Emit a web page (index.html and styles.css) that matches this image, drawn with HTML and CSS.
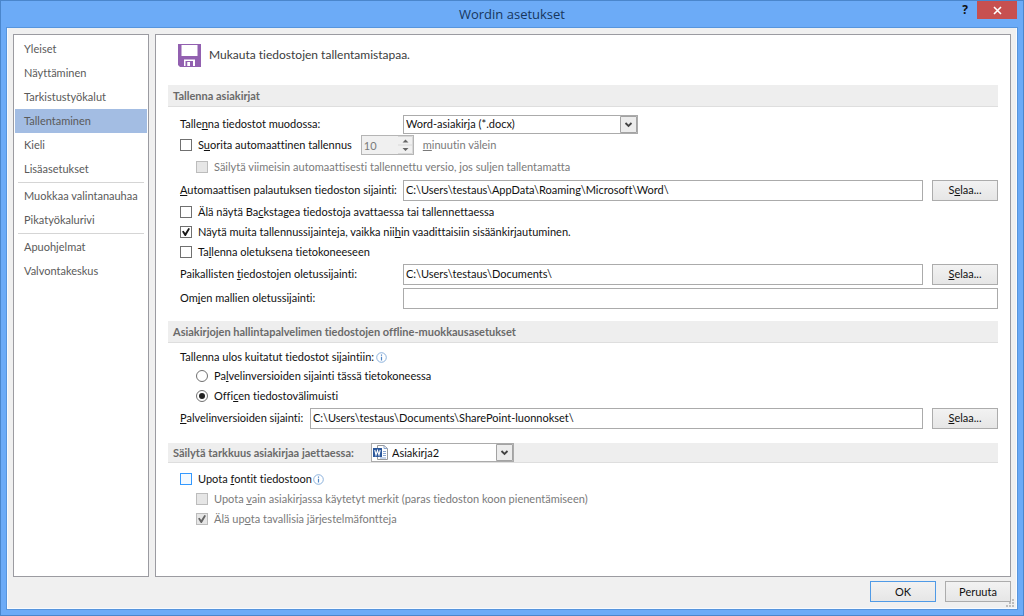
FILE: index.html
```html
<!DOCTYPE html>
<html lang="fi">
<head>
<meta charset="utf-8">
<meta name="viewport" content="width=device-width, initial-scale=1">
<title>Wordin asetukset</title>
<link rel="stylesheet" href="styles.css">
</head>
<body>
<div class="window">
  <header class="titlebar">
    <h1 class="titlebar-text">Wordin asetukset</h1>
    <div class="titlebar-buttons">
      <button class="help-button" type="button" aria-label="Ohje">?</button>
      <button class="close-button" type="button" aria-label="Sulje">
        <svg width="9" height="9" viewBox="0 0 9 9"><path d="M1 1l7 7M8 1l-7 7" stroke="#fff" stroke-width="1.6"/></svg>
      </button>
    </div>
  </header>
  <form class="dialog">
    <div class="panes">
      <nav class="sidebar">
        <a class="nav-item" href="#">Yleiset</a>
        <a class="nav-item" href="#">Näyttäminen</a>
        <a class="nav-item" href="#">Tarkistustyökalut</a>
        <a class="nav-item nav-item-current" href="#" aria-current="page">Tallentaminen</a>
        <a class="nav-item" href="#">Kieli</a>
        <a class="nav-item" href="#">Lisäasetukset</a>
        <hr class="nav-rule">
        <a class="nav-item" href="#">Muokkaa valintanauhaa</a>
        <a class="nav-item" href="#">Pikatyökalurivi</a>
        <hr class="nav-rule">
        <a class="nav-item" href="#">Apuohjelmat</a>
        <a class="nav-item" href="#">Valvontakeskus</a>
      </nav>
      <main class="content">
        <div class="intro">
          <svg class="intro-icon" width="23" height="23" viewBox="0 0 23 23">
            <path d="M0 0h23v23H2l-2-2z" fill="#9260b0"/>
            <path d="M3.500 1h16v11h-16zM6 15.500h11V22H6z" fill="#fff"/>
            <path d="M7.500 17H15v5h-3v-4H9.500v4h-2z" fill="#9260b0"/>
            <path d="M9.500 18H12v4H9.500z" fill="#fff"/>
          </svg>
          <p class="intro-text">Mukauta tiedostojen tallentamistapaa.</p>
        </div>

        <h2 class="section-title">Tallenna asiakirjat</h2>
        <div class="section">
          <div class="row row-compact">
            <label class="row-label" for="format">Talle<u>n</u>na tiedostot muodossa:</label>
            <span class="combo combo-format">
              <select class="combo-select" id="format"><option>Word-asiakirja (*.docx)</option></select>
              <svg class="combo-arrow" width="17" height="17" viewBox="0 0 17 17"><path d="M.5 .5h16v16H.5z" fill="#ececec" stroke="#a3a3a3"/><path d="M5.500 7l3 3 3-3" fill="none" stroke="#444" stroke-width="1.800"/></svg>
            </span>
          </div>
          <div class="row row-auto">
            <span class="check check-auto">
              <input class="box" type="checkbox" id="autosave">
              <label class="check-label" for="autosave">S<u>u</u>orita automaattinen tallennus</label>
            </span>
            <span class="spinner">
              <input class="spinner-input" type="number" id="minutes" value="10" disabled>
              <svg class="spinner-arrows" width="15" height="18" viewBox="0 0 15 18"><path d="M0 .5h14.500v17H0M0 9h14" fill="none" stroke="#d8d8d8"/><path d="M4.500 6.500l3-3 3 3zM4.500 12l3 3 3-3z" fill="#666"/></svg>
            </span>
            <label class="muted" for="minutes"><u>m</u>inuutin välein</label>
          </div>
          <div class="check check-tall check-nested">
            <input class="box" type="checkbox" id="keep" disabled>
            <label class="check-label muted" for="keep">Säilytä viimeisin automaattisesti tallennettu versio, jos suljen tallentamatta</label>
          </div>
          <div class="row">
            <label class="row-label" for="recovery"><u>A</u>utomaattisen palautuksen tiedoston sijainti:</label>
            <input class="field" type="text" id="recovery" value="C:\Users\testaus\AppData\Roaming\Microsoft\Word\">
            <button class="button" type="button">S<u>e</u>laa...</button>
          </div>
          <div class="check">
            <input class="box" type="checkbox" id="backstage">
            <label class="check-label" for="backstage">Älä näytä Ba<u>c</u>kstagea tiedostoja avattaessa tai tallennettaessa</label>
          </div>
          <div class="check">
            <input class="box" type="checkbox" id="others" checked>
            <label class="check-label" for="others">Näytä muita tallennussijainteja, vaikka nii<u>h</u>in vaadittaisiin sisäänkirjautuminen.</label>
          </div>
          <div class="check">
            <input class="box" type="checkbox" id="local">
            <label class="check-label" for="local">Ta<u>l</u>lenna oletuksena tietokoneeseen</label>
          </div>
          <div class="row">
            <label class="row-label" for="docs">Paikallisten <u>t</u>iedostojen oletussijainti:</label>
            <input class="field" type="text" id="docs" value="C:\Users\testaus\Documents\">
            <button class="button" type="button"><u>S</u>elaa...</button>
          </div>
          <div class="row">
            <label class="row-label" for="templates">Om<u>j</u>en mallien oletussijainti:</label>
            <input class="field" type="text" id="templates">
          </div>
        </div>

        <h2 class="section-title">Asiakirjojen hallintapalvelimen tiedostojen offline-muokkausasetukset</h2>
        <div class="section section-server" role="radiogroup" aria-labelledby="checkout">
          <div class="group-label">
            <span id="checkout">Tallenna ulos kuitatut tiedostot sijaintiin:</span>
            <svg class="info" width="11" height="11" viewBox="0 0 11 11"><circle cx="5.500" cy="5.500" r="4.800" fill="#fff" stroke="#7fa9d8" stroke-width=".9"/><path d="M5.500 2.500v1.300M5.500 4.800v3.700" stroke="#4f86c6" stroke-width="1.200"/></svg>
          </div>
          <div class="check check-nested">
            <input class="dot" type="radio" name="checkout" id="server">
            <label class="check-label" for="server">Pa<u>l</u>velinversioiden sijainti tässä tietokoneessa</label>
          </div>
          <div class="check check-nested">
            <input class="dot" type="radio" name="checkout" id="cache" checked>
            <label class="check-label" for="cache">Offi<u>c</u>en tiedostovälimuisti</label>
          </div>
          <div class="row">
            <label class="row-label row-label-short" for="drafts"><u>P</u>alvelinversioiden sijainti:</label>
            <input class="field" type="text" id="drafts" value="C:\Users\testaus\Documents\SharePoint-luonnokset\">
            <button class="button" type="button"><u>S</u>elaa...</button>
          </div>
        </div>

        <div class="section-title section-title-combo">
          <h2 class="section-heading"><label for="document">Säilytä tarkkuus asiakirjaa jaettaessa:</label></h2>
          <span class="combo combo-document">
            <select class="combo-select combo-select-icon" id="document"><option>Asiakirja2</option></select>
            <svg class="combo-icon" width="15" height="15" viewBox="0 0 15 15"><path d="M4.500 .5H11l3.500 3v11h-10z" fill="#fff" stroke="#9a9a9a"/><path d="M11 .5v3h3.500M10 6.500h3M10 8.500h3M10 10.500h3M7 13h6" fill="none" stroke="#8aa5cf"/><path d="M0 3h9v9H0z" fill="#2b579a"/><path d="M1.800 5l1.200 5L4.500 5.500 6 10l1.200-5" fill="none" stroke="#fff" stroke-width="1.100"/></svg>
            <svg class="combo-arrow" width="17" height="17" viewBox="0 0 17 17"><path d="M.5 .5h16v16H.5z" fill="#ececec" stroke="#a3a3a3"/><path d="M5.500 7l3 3 3-3" fill="none" stroke="#444" stroke-width="1.800"/></svg>
          </span>
        </div>
        <div class="section section-fonts">
          <div class="check">
            <input class="box box-focus" type="checkbox" id="embed">
            <label class="check-label" for="embed">Upota <u>f</u>ontit tiedostoon</label>
            <svg class="info" width="11" height="11" viewBox="0 0 11 11"><circle cx="5.500" cy="5.500" r="4.800" fill="#fff" stroke="#7fa9d8" stroke-width=".9"/><path d="M5.500 2.500v1.300M5.500 4.800v3.700" stroke="#4f86c6" stroke-width="1.200"/></svg>
          </div>
          <div class="check check-nested">
            <input class="box" type="checkbox" id="used" disabled>
            <label class="check-label muted" for="used">Upota <u>v</u>ain asiakirjassa käytetyt merkit (paras tiedoston koon pienentämiseen)</label>
          </div>
          <div class="check check-nested">
            <input class="box" type="checkbox" id="system" checked disabled>
            <label class="check-label muted" for="system">Älä up<u>o</u>ta tavallisia järjestelmäfontteja</label>
          </div>
        </div>
      </main>
    </div>
    <footer class="actions">
      <button class="button button-default" type="button">OK</button>
      <button class="button" type="button">Peruuta</button>
      <svg class="grip" width="8" height="8" viewBox="0 0 8 8"><path d="M6 0h2v2H6zM3 3h2v2H3zM6 3h2v2H6zM0 6h2v2H0zM3 6h2v2H3zM6 6h2v2H6z" fill="#bdbdbd"/></svg>
    </footer>
  </form>
</div>
</body>
</html>
```
FILE: styles.css
```css
* { box-sizing: border-box; }

body {
  margin: 0;
  font: 11px/16px Lato, "Open Sans", sans-serif;
  font-variant-ligatures: none;
  color: #111;
}

button, input, select { font: inherit; color: inherit; margin: 0; }
h1, h2, p { margin: 0; font-size: inherit; font-weight: normal; }
u { text-underline-offset: 1px; text-decoration-skip-ink: none; }

.window {
  display: flex;
  flex-direction: column;
  min-height: 100vh;
  padding: 0 6px 6px;
  background: #6cabf7;
  border: 1px solid #4a86cc;
}

.titlebar { position: relative; height: 27px; }
.titlebar-text {
  text-align: center;
  font-family: "Open Sans", sans-serif;
  font-size: 13px;
  line-height: 26px;
  color: #17365d;
}
.titlebar-buttons {
  position: absolute;
  top: 0;
  right: 0;
  display: flex;
}
.help-button, .close-button {
  display: grid;
  place-items: center;
  height: 18px;
  padding: 0;
  border: 0;
}
.help-button {
  width: 24px;
  background: none;
  font-family: "Open Sans", sans-serif;
  font-size: 12px;
  font-weight: bold;
}
.close-button { width: 40px; background: #c75050; }

.dialog {
  flex: 1;
  display: flex;
  flex-direction: column;
  padding: 6px 5px 0;
  background: #f0f0f0;
  border: 1px solid #f8fbff;
  border-top: 0;
  outline: 1px solid #5795dd;
}
.panes { flex: 1; display: flex; gap: 6px; }
.sidebar, .content { background: #fff; border: 1px solid #9b9ba1; }

.sidebar { width: 136px; padding: 2px 1px; color: #5a5a5a; }
.nav-item {
  display: block;
  padding-left: 9px;
  line-height: 24px;
  white-space: nowrap;
  color: inherit;
  text-decoration: none;
}
.nav-item-current { background: #a3bde3; }
.nav-rule { margin: 1px 3px; border: 0; border-top: 1px solid #d5d5d5; }

.content { flex: 1; padding: 0 12px 12px; }
.intro { display: flex; align-items: center; gap: 8px; height: 50px; padding: 0 10px 10px; }
.intro-text { font-size: 12px; color: #3c3c3c; }

.section-title {
  padding-left: 5px;
  font-weight: bold;
  line-height: 21px;
  color: #6a6a6a;
  background: #eee;
  border-bottom: 1px solid #dedede;
}
.section-title-combo { display: flex; align-items: center; gap: 16px; height: 20px; }
.section-heading { min-width: 182px; font-weight: bold; }

.section { padding: 7px 0 11px 12px; }
.section-server { padding: 5px 0 13px 12px; }
.section-fonts { padding-top: 6px; }

.row { display: flex; align-items: center; height: 24px; }
.row-compact { height: 20px; }
.row-auto { height: 22px; }
.row-label { width: 223px; white-space: nowrap; }
.row-label-short { width: 130px; }
.muted { color: #7a7a7a; }

.field {
  flex: 1;
  min-width: 0;
  height: 21px;
  padding: 0 2px 2px;
  background: #fff;
  border: 1px solid #ababab;
}

.button {
  width: 66px;
  height: 21px;
  margin-left: 9px;
  padding: 0;
  background: linear-gradient(#f2f2f2, #e6e6e6);
  border: 1px solid #acacac;
}
.button-default { border-color: #4f9ae6; }

.check { display: flex; align-items: center; height: 20px; white-space: nowrap; }
.check-tall { height: 22px; }
.check-auto { min-width: 170px; }
.check-nested { padding-left: 16px; }
.check-label { margin-left: 6px; }

.box, .dot {
  appearance: none;
  display: grid;
  place-items: center;
  width: 12px;
  height: 12px;
  background: #fff;
  border: 1px solid #707070;
}
.box:disabled { background: #e6e6e6; border-color: #bcbcbc; }
.box-focus { background: #f3f9ff; border-color: #3399ff; }
.box:checked::before {
  content: "";
  width: 8px;
  height: 8px;
  background: #1a1a1a;
  clip-path: polygon(0 45%, 20% 35%, 40% 62%, 80% 0, 100% 10%, 48% 100%, 35% 100%);
}
.box:disabled:checked::before { background: #666; }
.dot { border-radius: 50%; }
.dot:checked::before {
  content: "";
  width: 6px;
  height: 6px;
  background: #222;
  border-radius: 50%;
}

.combo { position: relative; display: flex; height: 19px; }
.combo-format { width: 235px; }
.combo-document { width: 143px; font-weight: normal; line-height: 16px; color: #111; }
.combo-select {
  appearance: none;
  width: 100%;
  padding: 0 20px 0 2px;
  background: #fff;
  border: 1px solid #ababab;
  border-radius: 0;
}
.combo-select-icon { padding-left: 20px; }
.combo-arrow { position: absolute; top: 1px; right: 1px; pointer-events: none; }
.combo-icon { position: absolute; top: 2px; left: 2px; pointer-events: none; }

.spinner { position: relative; display: flex; width: 53px; margin: 0 9px; }
.spinner-input {
  appearance: textfield;
  width: 100%;
  height: 20px;
  padding: 0 2px;
  color: #7a7a7a;
  background: #f0f0f0;
  border: 1px solid #b5b5b5;
}
.spinner-arrows { position: absolute; top: 1px; right: 1px; pointer-events: none; }

.group-label { display: flex; align-items: center; gap: 1px; height: 18px; }
.info { margin-left: 1px; }

.actions {
  position: relative;
  display: flex;
  justify-content: flex-end;
  padding: 4px 0 6px;
}
.grip { position: absolute; right: -3px; bottom: 1px; }
```
